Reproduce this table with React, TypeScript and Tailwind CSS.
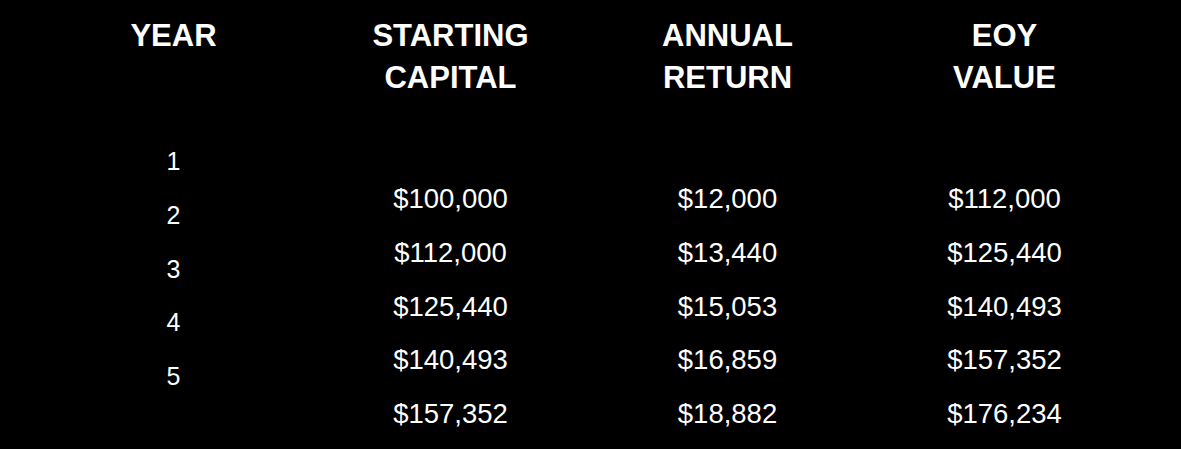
import React from "react";

const rows = [
  { start: "$100,000", ret: "$12,000", eoy: "$112,000" },
  { start: "$112,000", ret: "$13,440", eoy: "$125,440" },
  { start: "$125,440", ret: "$15,053", eoy: "$140,493" },
  { start: "$140,493", ret: "$16,859", eoy: "$157,352" },
  { start: "$157,352", ret: "$18,882", eoy: "$176,234" },
];

const years = [1, 2, 3, 4, 5];

function Header({ lines }: { lines: string[] }) {
  return (
    <div className="h-[84px] text-[31px] font-bold leading-[42px] text-white">
      {lines.map((l) => (
        <div key={l}>{l}</div>
      ))}
    </div>
  );
}

function MoneyColumn({ title, values }: { title: string[]; values: string[] }) {
  return (
    <div className="flex w-[277px] flex-col items-center text-center">
      <Header lines={title} />
      <div className="mt-[73px] text-[27.5px] leading-[53.75px] text-white">
        {values.map((v) => (
          <div key={v}>{v}</div>
        ))}
      </div>
    </div>
  );
}

export default function App() {
  return (
    <div
      className="h-[449px] w-full overflow-hidden bg-black"
      style={{ fontFamily: '"Liberation Sans", Arial, sans-serif' }}
    >
      <div className="flex pl-[35px] pt-[15px]">
        <div className="flex w-[277px] flex-col items-center text-center">
          <Header lines={["YEAR"]} />
          <div className="mt-[36px] text-[25px] leading-[53.75px] text-white">
            {years.map((y) => (
              <div key={y}>{y}</div>
            ))}
          </div>
        </div>
        <MoneyColumn title={["STARTING", "CAPITAL"]} values={rows.map((r) => r.start)} />
        <MoneyColumn title={["ANNUAL", "RETURN"]} values={rows.map((r) => r.ret)} />
        <MoneyColumn title={["EOY", "VALUE"]} values={rows.map((r) => r.eoy)} />
      </div>
    </div>
  );
}
